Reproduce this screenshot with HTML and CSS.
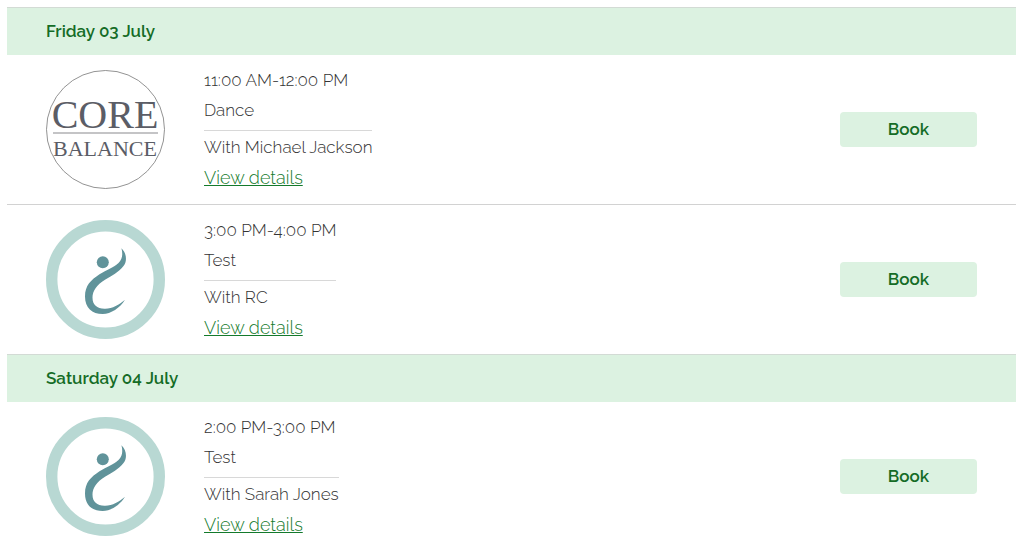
FILE: index.html
```html
<!DOCTYPE html>
<html lang="en">
<head>
<meta charset="utf-8">
<meta name="viewport" content="width=device-width, initial-scale=1">
<title>Class timetable</title>
<link rel="stylesheet" href="styles.css">
</head>
<body>
<svg class="sprite" aria-hidden="true">
  <symbol id="figure" viewBox="0 0 119 119">
    <circle cx="59.5" cy="59.5" r="53.8" fill="#fff" stroke="#b8d8d3" stroke-width="11.4"/>
    <circle cx="56.8" cy="42.3" r="6" fill="#60939a"/>
    <path fill="#60939a" d="M75.4 28.3C80.500 33 81.500 41 77.500 46C72.500 52.500 66 55.500 59 59.700C50.500 65 46.500 71 46.500 77.500C46.500 85 51 88.500 58.500 88.700C66 89 73 85 79 79.800C74 88 65 94 56.700 94C46 94 39 88 39 76.500C39 65.500 45 60 53.500 54.300C61 49.500 67 48 72.500 43C76.500 39 77 34 75.400 28.300Z"/>
  </symbol>
</svg>
<main class="timetable">
  <section class="day">
    <h2 class="day-title">Friday 03 July</h2>
    <article class="session">
      <svg class="avatar" viewBox="0 0 119 119" role="img" aria-label="Core Balance">
        <circle cx="59.5" cy="59.5" r="59" fill="#fff" stroke="#777" stroke-width="0.8"/>
        <text class="logo-top" x="59" y="58" text-anchor="middle">CORE</text>
        <rect x="7" y="62" width="105" height="2" fill="#c4c4c6"/>
        <text class="logo-bottom" x="59" y="86" text-anchor="middle">BALANCE</text>
      </svg>
      <div class="details">
        <p class="summary">11:00 AM-12:00 PM<br>Dance</p>
        <p class="host">With Michael Jackson</p>
        <a class="more" href="#details-1">View details</a>
      </div>
      <button class="book" type="button">Book</button>
    </article>
    <article class="session">
      <svg class="avatar" role="img" aria-label="RC"><use href="#figure"/></svg>
      <div class="details">
        <p class="summary">3:00 PM-4:00 PM<br>Test</p>
        <p class="host">With RC</p>
        <a class="more" href="#details-2">View details</a>
      </div>
      <button class="book" type="button">Book</button>
    </article>
  </section>
  <section class="day">
    <h2 class="day-title">Saturday 04 July</h2>
    <article class="session">
      <svg class="avatar" role="img" aria-label="Sarah Jones"><use href="#figure"/></svg>
      <div class="details">
        <p class="summary">2:00 PM-3:00 PM<br>Test</p>
        <p class="host">With Sarah Jones</p>
        <a class="more" href="#details-3">View details</a>
      </div>
      <button class="book" type="button">Book</button>
    </article>
  </section>
</main>
</body>
</html>
```
FILE: styles.css
```css
* {
  box-sizing: border-box;
}

body {
  margin: 0;
  background: #fff;
  color: #333;
  font-family: Raleway, Lato, sans-serif;
  font-size: 17px;
  font-weight: 300;
  line-height: 30px;
}

.sprite {
  display: none;
}

.timetable {
  padding: 7px 8px 0 7px;
}

.day-title {
  margin: 0;
  padding: 8px 39px 9px;
  border-top: 1px solid #d3dbd5;
  background: #dcf2e1;
  color: #146c26;
  font-size: 17px;
  font-weight: 600;
}

.session {
  display: flex;
  align-items: center;
  padding: 15px 39px;
}

.session + .session {
  border-top: 1px solid #d2d2d2;
}

.avatar {
  flex: none;
  width: 119px;
  height: 119px;
  margin-right: 39px;
}

.logo-top,
.logo-bottom {
  fill: #5b5d66;
  font-family: "Liberation Serif", serif;
  font-weight: 400;
}

.logo-top {
  font-size: 40px;
}

.logo-bottom {
  font-size: 22px;
}

.details {
  margin: -5px auto -5px 0;
  padding-bottom: 1px;
}

.summary,
.host {
  margin: 0;
}

.summary {
  margin-bottom: 1px;
  padding-bottom: 5px;
  border-bottom: 1px solid #d8d8d8;
}

.host {
  margin-bottom: 1px;
}

.more {
  color: #147a2c;
  font-size: 18px;
}

.book {
  width: 137px;
  height: 35px;
  padding: 0 0 2px;
  border: 0;
  border-radius: 4px;
  background: #dcf2e1;
  color: #146c26;
  font: inherit;
  font-weight: 600;
  line-height: 30px;
  cursor: pointer;
}
```
